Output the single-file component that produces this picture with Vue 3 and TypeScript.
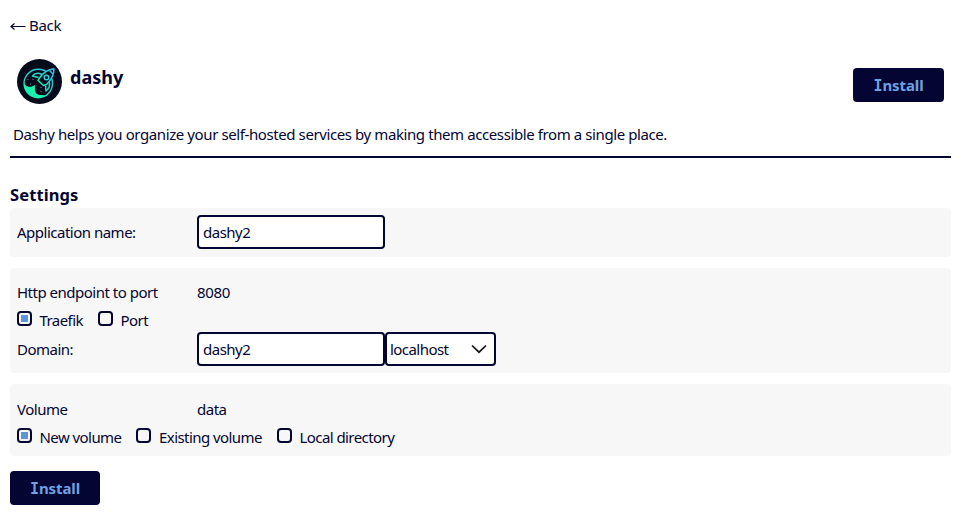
<script setup lang="ts">
import { ref } from 'vue'

const appName = ref('dashy2')
const subdomain = ref('dashy2')
const domain = ref('localhost')
const exposure = ref('Traefik')
const volumeType = ref('New volume')

const exposures: string[] = ['Traefik', 'Port']
const volumeTypes: string[] = ['New volume', 'Existing volume', 'Local directory']
</script>

<template>
  <main class="page">
    <a class="back">
      <svg class="arrow" viewBox="0 0 16 12" width="16" height="12"><path d="M15.500 7.500H1M4.500 4.500L1 7.500l3.500 3" /></svg>
      <span>Back</span>
    </a>

    <header class="head">
      <svg class="logo" viewBox="0 0 45 45" width="45" height="45">
        <defs>
          <linearGradient id="g" x1="0" y1="1" x2="1" y2="0">
            <stop offset="0" stop-color="#14f5a5" />
            <stop offset="1" stop-color="#35b8ec" />
          </linearGradient>
        </defs>
        <circle cx="22.5" cy="22.5" r="22.5" fill="#060b1c" />
        <circle cx="21.300" cy="24.500" r="14.200" fill="none" stroke="url(#g)" stroke-width="1.400" />
        <path d="M6.800 25C10 28 14 28 18 26C17 32 21 36 29 36.500A14.500 14.500 0 0 1 6.800 25Z" fill="#1cefae" />
        <circle cx="13" cy="22.500" r="5.200" fill="#060b1c" />
        <circle cx="23.500" cy="30.500" r="5.600" fill="#060b1c" />
        <path d="M22.500 19Q28 11 37 9.800Q37 18.500 29.500 25.500L26.500 26.500L21 21.500Z" fill="#060b1c" stroke="url(#g)" stroke-width="1.500" stroke-linejoin="round" />
        <path d="M25 15.500Q19 12.500 15.500 17L21.500 18.500M32 23Q34 28 29 32L28.500 26.500M32.500 11.500L36 15" fill="none" stroke="url(#g)" stroke-width="1.500" stroke-linejoin="round" />
        <circle cx="29.500" cy="18.500" r="2.300" fill="none" stroke="#2bd0dd" stroke-width="1.400" />
        <path d="M10.500 20.500h1M15.500 20.500h1M13 25h1M23.500 28.500h1M23.500 32.500h1" stroke="#8094a0" stroke-width=".9" />
      </svg>
      <h1 class="title">dashy</h1>
      <button class="install"><span class="caption">Install</span></button>
    </header>

    <p class="desc">Dashy helps you organize your self-hosted services by making them accessible from a single place.</p>

    <h2 class="heading">Settings</h2>

    <section class="panel">
      <div class="row field">
        <label class="key">Application name:</label>
        <input v-model="appName" class="box" type="text" />
      </div>
    </section>

    <section class="panel endpoint">
      <div class="row info">
        <span class="key">Http endpoint to port</span>
        <span class="num">8080</span>
      </div>
      <div class="options">
        <label v-for="item in exposures" :key="item" class="option">
          <input v-model="exposure" type="radio" name="exposure" :value="item" class="check" />
          <span>{{ item }}</span>
        </label>
      </div>
      <div class="row field">
        <label class="key">Domain:</label>
        <input v-model="subdomain" class="box" type="text" />
        <div class="select">
          <span>{{ domain }}</span>
          <svg viewBox="0 0 16 10" width="16" height="10"><path d="M1 1.500L8 8.200L15 1.500" /></svg>
        </div>
      </div>
    </section>

    <section class="panel volume">
      <div class="row info">
        <span class="key">Volume</span>
        <span>data</span>
      </div>
      <div class="options">
        <label v-for="item in volumeTypes" :key="item" class="option">
          <input v-model="volumeType" type="radio" name="volume" :value="item" class="check" />
          <span>{{ item }}</span>
        </label>
      </div>
    </section>

    <button class="install"><span class="caption">Install</span></button>
  </main>
</template>

<style>
body {
  background: #fff;
}
</style>

<style scoped>
.page {
  box-sizing: border-box;
  height: 515px;
  padding: 15px 11px 0 10px;
  overflow: hidden;
  font: 15px/20px Tahoma, "Noto Sans", sans-serif;
  letter-spacing: -0.5px;
  color: #040532;
}
.back {
  display: flex;
  align-items: center;
  gap: 3px;
  height: 20px;
  letter-spacing: -0.3px;
}
.arrow path {
  fill: none;
  stroke: #040532;
  stroke-width: 1.2;
}
.head {
  display: flex;
  align-items: flex-start;
  height: 65px;
  padding: 24px 7px 0;
}
.title {
  margin: 5px auto 0 8px;
  font-size: 18px;
  line-height: 26px;
  letter-spacing: 0;
}
.head .install {
  width: 91px;
  margin-top: 9px;
}
.install {
  display: block;
  width: 90px;
  height: 34px;
  padding: 0;
  border: 0;
  border-radius: 4px;
  background: #040532;
  color: #6fa1e2;
  font: bold 15px/34px Tahoma, "Noto Sans", sans-serif;
  letter-spacing: -0.1px;
}
.caption {
  display: inline-block;
}
.caption::first-letter {
  font-family: "DejaVu Sans Mono", monospace;
}
.desc {
  height: 32px;
  margin: 0;
  border-bottom: 2px solid #040532;
  padding-left: 3px;
  letter-spacing: -0.405px;
}
.heading {
  margin: 27px 0 3px;
  font-size: 16.5px;
  line-height: 20px;
  letter-spacing: 0.1px;
}
.panel {
  box-sizing: border-box;
  height: 49px;
  margin-bottom: 11px;
  padding: 7px;
  border-radius: 4px;
  background: #f7f7f7;
}
.endpoint {
  height: 105px;
}
.endpoint .info {
  height: 34px;
}
.endpoint .options {
  height: 22px;
  margin-top: 1px;
}
.volume {
  height: 72px;
  margin-bottom: 15px;
}
.row {
  display: flex;
  align-items: center;
}
.field {
  height: 34px;
}
.info {
  height: 36px;
}
.key {
  width: 180px;
}
.num {
  letter-spacing: -0.3px;
}
.box {
  box-sizing: border-box;
  width: 188px;
  height: 34px;
  padding: 0 4px;
  border: 2px solid #040532;
  border-radius: 4px;
  background: #fff;
  color: inherit;
  font: inherit;
  letter-spacing: inherit;
  outline: 0;
}
.select {
  box-sizing: border-box;
  display: flex;
  align-items: center;
  justify-content: space-between;
  width: 111px;
  height: 34px;
  padding: 0 7px 0 3px;
  border: 2px solid #040532;
  border-radius: 4px;
  background: #fff;
  letter-spacing: -0.55px;
}
.select path {
  fill: none;
  stroke: #151515;
  stroke-width: 1.7;
}
.options {
  display: flex;
  gap: 15px;
  height: 21px;
  letter-spacing: -0.56px;
}
.option {
  display: flex;
  gap: 7.5px;
  height: 20px;
}
.check {
  appearance: none;
  box-sizing: border-box;
  width: 15px;
  height: 15px;
  margin: 1px 0 0;
  border: 2px solid #040532;
  border-radius: 4px;
}
.check:checked {
  padding: 2px;
  background: #5b95db content-box;
}
</style>
